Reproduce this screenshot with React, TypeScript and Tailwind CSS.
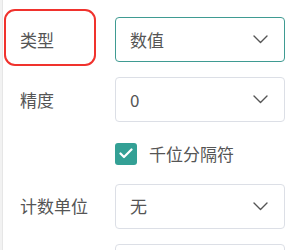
import React from 'react';

const Chevron = () => (
  <svg width="15" height="9" viewBox="0 0 15 9" fill="none" className="shrink-0">
    <path d="M1 1L7.5 7.5L14 1" stroke="#555" strokeWidth="1.4" strokeLinecap="round" strokeLinejoin="round" />
  </svg>
);

const Select = ({ value, active }: { value: string; active?: boolean }) => (
  <div
    className={`w-[170px] h-[45px] rounded-[4px] border flex items-center justify-between pl-[14px] pr-[16px] bg-white ${
      active ? 'border-[#3f9b92]' : 'border-[#dcdfe6]'
    }`}
  >
    <span className="text-[17px] text-[#555]">{value}</span>
    <Chevron />
  </div>
);

const App: React.FC = () => {
  return (
    <div
      className="w-[300px] h-[250px] overflow-hidden bg-white flex"
      style={{ fontFamily: '"Noto Sans CJK SC", "Noto Sans", sans-serif' }}
    >
      <div className="w-[3px] shrink-0 bg-[#f2f2f2] border-r border-[#e6e6e6]" />
      <div className="flex-1 flex flex-col relative">
        <div className="h-[4px] bg-[#f8f8f8]" />

        {/* annotation box */}
        <div className="absolute left-[1px] top-[9px] w-[92px] h-[57px] rounded-[11px] border-2 border-[#f0322d]" />

        <div className="flex items-center mt-[17px]">
          <span className="w-[112px] pl-[17px] text-[17px] text-[#555]">类型</span>
          <Select value="数值" active />
        </div>

        <div className="flex items-center mt-[15px]">
          <span className="w-[112px] pl-[17px] text-[17px] text-[#555]">精度</span>
          <Select value="0" />
        </div>

        <div className="flex items-center mt-[19px] pl-[112px]">
          <div className="w-[22px] h-[22px] rounded-[3px] bg-[#33a095] flex items-center justify-center">
            <svg width="14" height="11" viewBox="0 0 14 11" fill="none">
              <path d="M1.5 5.5L5 9L12.5 1.5" stroke="white" strokeWidth="2.2" strokeLinecap="round" strokeLinejoin="round" />
            </svg>
          </div>
          <span className="ml-[12px] text-[17px] text-[#555]">千位分隔符</span>
        </div>

        <div className="flex items-center mt-[17px]">
          <span className="w-[112px] pl-[17px] text-[17px] text-[#555]">计数单位</span>
          <Select value="无" />
        </div>

        <div className="flex items-center mt-[15px]">
          <span className="w-[112px]" />
          <Select value="" />
        </div>
      </div>
    </div>
  );
};

export default App;
